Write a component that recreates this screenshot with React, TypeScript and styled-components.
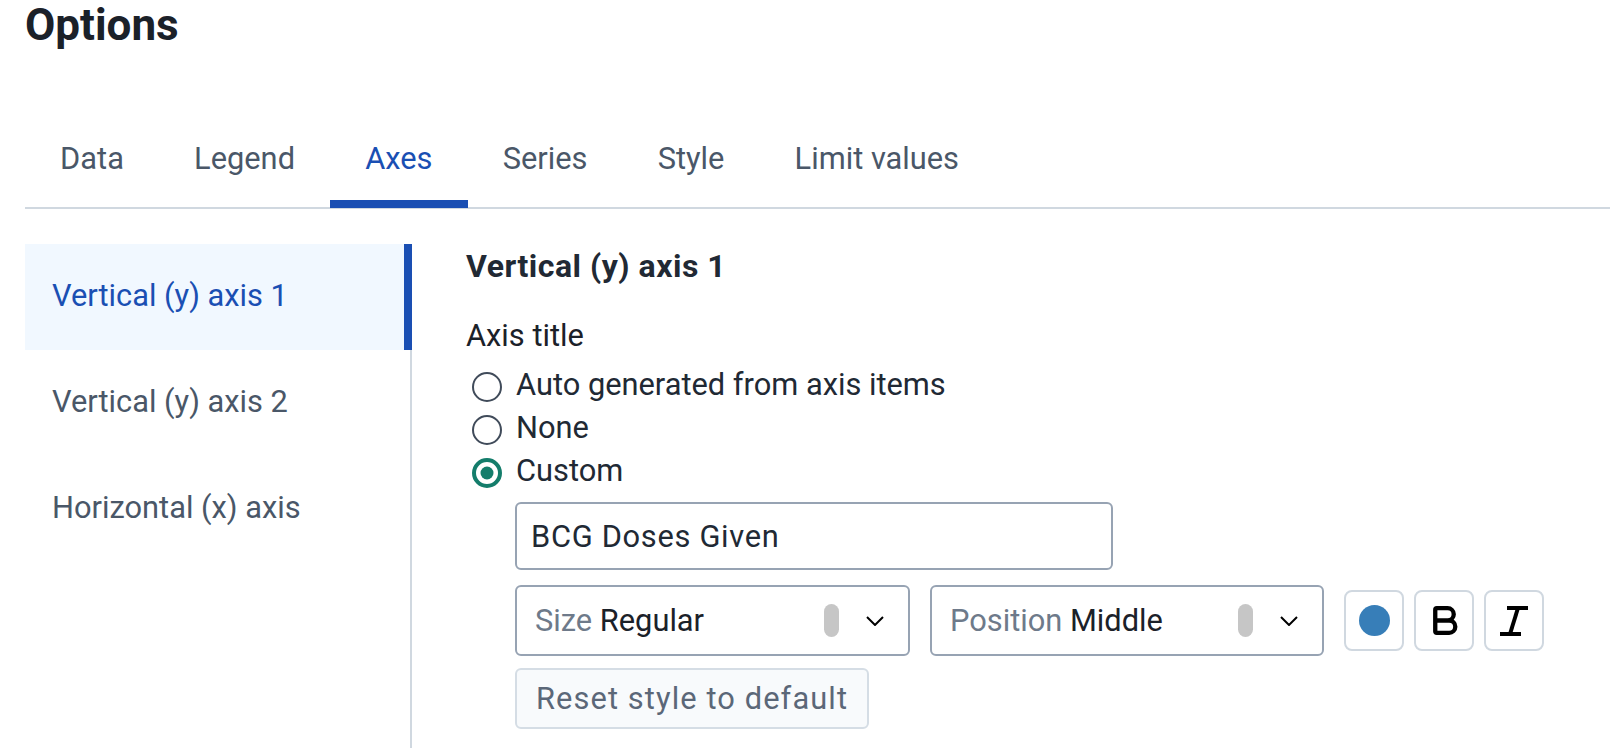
import React, { useState } from "react";
import styled, { createGlobalStyle } from "styled-components";
import { Bold } from "lucide-react";

const GlobalStyle = createGlobalStyle`
  html, body {
    margin: 0;
    padding: 0;
    height: 100%;
    overflow: hidden;
    background: #ffffff;
  }
  body {
    font-family: Roboto, "Liberation Sans", Arial, sans-serif;
    color: #212934;
  }
  * { box-sizing: border-box; }
`;

const Page = styled.div`
  height: 100vh;
  display: flex;
  flex-direction: column;
  padding-left: 25px;
`;

const Title = styled.h1`
  margin: 0;
  font-size: 44px;
  line-height: 50px;
  font-weight: 700;
  color: #1b2129;
`;

const TabList = styled.div`
  display: flex;
  margin-top: 75px;
  border-bottom: 2px solid #d0d8e0;
`;

const Tab = styled.div<{ $active?: boolean }>`
  padding: 16px 35.1px 23px;
  margin-bottom: -1px;
  font-size: 30.8px;
  line-height: 36px;
  color: ${(p) => (p.$active ? "#1a4fb3" : "#4a5768")};
  border-bottom: 8px solid ${(p) => (p.$active ? "#1a4fb3" : "transparent")};
  cursor: pointer;
`;

const Body = styled.div`
  flex: 1;
  display: flex;
  margin-top: 35px;
  min-height: 0;
`;

const Sidebar = styled.nav`
  width: 387px;
  flex: none;
  border-right: 2px solid #d0d8e0;
`;

const SideItem = styled.div<{ $active?: boolean }>`
  margin-right: -2px;
  padding: 34px 27px 36px;
  font-size: 30.8px;
  line-height: 36px;
  color: ${(p) => (p.$active ? "#1a4fb3" : "#4a5768")};
  background: ${(p) => (p.$active ? "#f1f8ff" : "transparent")};
  border-right: 8px solid ${(p) => (p.$active ? "#1a4fb3" : "transparent")};
  cursor: pointer;
`;

const Panel = styled.section`
  flex: 1;
  padding: 4px 0 0 54px;
`;

const PanelTitle = styled.h2`
  margin: 0;
  font-size: 32px;
  letter-spacing: 0.5px;
  line-height: 36px;
  font-weight: 700;
  color: #212934;
`;

const FieldLabel = styled.div`
  margin-top: 34px;
  font-size: 30.8px;
  line-height: 36px;
  color: #1b2129;
`;

const RadioGroup = styled.div`
  margin-top: 9px;
  margin-left: 6px;
  display: flex;
  flex-direction: column;
`;

const RadioRow = styled.label`
  display: flex;
  align-items: center;
  height: 43px;
  font-size: 30.8px;
  line-height: 43px;
  color: #212934;
  cursor: pointer;
`;

const RadioMark = styled.svg`
  flex: none;
  width: 30px;
  height: 30px;
  margin-top: 4px;
  margin-right: 14px;
`;

const CustomBlock = styled.div`
  margin-top: 10px;
  margin-left: 49px;
`;

const TextInput = styled.input`
  display: block;
  width: 598px;
  height: 68px;
  padding: 0 14px;
  border: 2px solid #97a3b3;
  border-radius: 6px;
  font-family: inherit;
  font-size: 30.8px;
  letter-spacing: 0.7px;
  color: #212934;
  outline: none;
  background: #fff;
`;

const StyleRow = styled.div`
  display: flex;
  align-items: center;
  margin-top: 15px;
`;

const Select = styled.div<{ $w: number }>`
  display: flex;
  align-items: center;
  width: ${(p) => p.$w}px;
  height: 71px;
  padding: 0 24px 0 18px;
  margin-right: 20px;
  border: 2px solid #97a3b3;
  border-radius: 6px;
  font-size: 30.8px;
  background: #fff;
`;

const SelectText = styled.span`
  flex: 1;
  white-space: nowrap;
`;

const SelectPrefix = styled.span`
  color: #6e7a8a;
`;

const SelectValue = styled.span`
  color: #1b2129;
`;

const Pill = styled.span`
  width: 15px;
  height: 33px;
  border-radius: 8px;
  background: #c6c6c6;
  flex: none;
`;

const Chevron = styled.svg`
  margin-left: 27px;
  width: 18px;
  height: 10px;
  flex: none;
`;

const ButtonGroup = styled.div`
  display: flex;
  gap: 10px;
`;

const IconButton = styled.button`
  width: 60px;
  height: 61px;
  padding: 0;
  display: flex;
  align-items: center;
  justify-content: center;
  border: 2px solid #d0d8e0;
  border-radius: 8px;
  background: #fff;
  color: #000;
  cursor: pointer;
`;

const ColorDot = styled.span<{ $color: string }>`
  width: 31px;
  height: 31px;
  border-radius: 50%;
  background: ${(p) => p.$color};
`;

const ResetButton = styled.button`
  margin-top: 12px;
  height: 61px;
  padding: 0 19px;
  border: 2px solid #d5dde5;
  border-radius: 6px;
  background: #f8fafc;
  color: #5b6778;
  font-family: inherit;
  font-size: 30.8px;
  letter-spacing: 1.1px;
  cursor: not-allowed;
`;

const Radio = ({ checked }: { checked?: boolean }) => (
  <RadioMark viewBox="0 0 30 30">
    {checked ? (
      <>
        <circle cx="15" cy="15" r="13" fill="none" stroke="#147d6b" strokeWidth="4" />
        <circle cx="15" cy="15" r="6.5" fill="#147d6b" />
      </>
    ) : (
      <circle cx="15" cy="15" r="14" fill="none" stroke="#404b5a" strokeWidth="2" />
    )}
  </RadioMark>
);

const ItalicIcon = () => (
  <svg width="32" height="32" viewBox="0 0 32 32" fill="none" stroke="#000" strokeWidth="4">
    <line x1="9" y1="3" x2="30" y2="3" />
    <line x1="2" y1="29" x2="23" y2="29" />
    <line x1="20" y1="3" x2="12" y2="29" />
  </svg>
);

const ChevronDown = () => (
  <Chevron viewBox="0 0 18 10">
    <polyline points="1,1 9,9 17,1" fill="none" stroke="#000" strokeWidth="2" />
  </Chevron>
);

const tabs = ["Data", "Legend", "Axes", "Series", "Style", "Limit values"];
const axes = ["Vertical (y) axis 1", "Vertical (y) axis 2", "Horizontal (x) axis"];
const titleOptions = [
  { id: "auto", label: "Auto generated from axis items" },
  { id: "none", label: "None" },
  { id: "custom", label: "Custom" },
];

export default function App() {
  const [tab, setTab] = useState("Axes");
  const [axis, setAxis] = useState(axes[0]);
  const [titleType, setTitleType] = useState("custom");

  return (
    <>
      <GlobalStyle />
      <Page>
        <Title>Options</Title>
        <TabList>
          {tabs.map((t) => (
            <Tab key={t} $active={t === tab} onClick={() => setTab(t)}>
              {t}
            </Tab>
          ))}
        </TabList>
        <Body>
          <Sidebar>
            {axes.map((a) => (
              <SideItem key={a} $active={a === axis} onClick={() => setAxis(a)}>
                {a}
              </SideItem>
            ))}
          </Sidebar>
          <Panel>
            <PanelTitle>{axis}</PanelTitle>
            <FieldLabel>Axis title</FieldLabel>
            <RadioGroup>
              {titleOptions.map((o) => (
                <RadioRow key={o.id} onClick={() => setTitleType(o.id)}>
                  <Radio checked={o.id === titleType} />
                  {o.label}
                </RadioRow>
              ))}
            </RadioGroup>
            <CustomBlock>
              <TextInput defaultValue="BCG Doses Given" />
              <StyleRow>
                <Select $w={395}>
                  <SelectText>
                    <SelectPrefix>Size </SelectPrefix>
                    <SelectValue>Regular</SelectValue>
                  </SelectText>
                  <Pill />
                  <ChevronDown />
                </Select>
                <Select $w={394}>
                  <SelectText>
                    <SelectPrefix>Position </SelectPrefix>
                    <SelectValue>Middle</SelectValue>
                  </SelectText>
                  <Pill />
                  <ChevronDown />
                </Select>
                <ButtonGroup>
                  <IconButton aria-label="Color">
                    <ColorDot $color="#377eb8" />
                  </IconButton>
                  <IconButton aria-label="Bold">
                    <Bold size={37} strokeWidth={2.8} />
                  </IconButton>
                  <IconButton aria-label="Italic">
                    <ItalicIcon />
                  </IconButton>
                </ButtonGroup>
              </StyleRow>
              <ResetButton disabled>Reset style to default</ResetButton>
            </CustomBlock>
          </Panel>
        </Body>
      </Page>
    </>
  );
}
